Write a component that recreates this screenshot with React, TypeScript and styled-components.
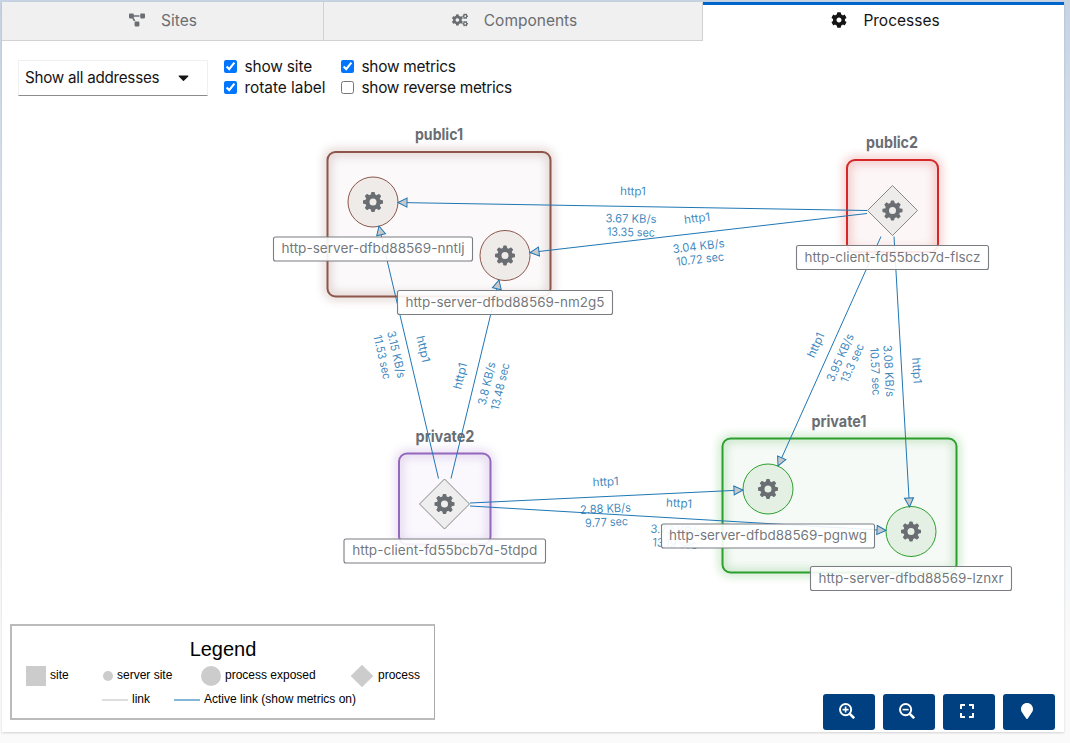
import React from "react";
import styled, { createGlobalStyle } from "styled-components";
import { FaProjectDiagram, FaCogs, FaCog, FaExpand, FaMapMarker, FaCaretDown } from "react-icons/fa";

const font = `Inter, "Open Sans", sans-serif`;

const Global = createGlobalStyle`
  *{box-sizing:border-box}
  body{margin:0;background:#fafafa;font-family:${font};color:#151515}
`;
const Page = styled.div`
  width:1070px;height:743px;padding:2px 5px 0 2px;overflow:hidden;
  background:linear-gradient(to bottom,#c7d3e3 0,#d3deeb 130px,#dfe7f0 300px,#f2f4f7 520px,#fafafa 640px);
`;
const Card = styled.main`
  width:1062px;height:730px;background:#fff;box-shadow:0 1px 2px rgba(3,3,3,.16);
  display:flex;flex-direction:column;
`;
const Tabs = styled.nav`display:flex;height:39px;flex:none;`;
const Tab = styled.button<{ $w: number; $active?: boolean; $shift?: number }>`
  width:${p => p.$w}px;height:39px;margin:0;border:0;
  padding:0 0 3px ${p => p.$shift ?? 0}px;
  display:flex;align-items:center;justify-content:center;gap:16px;
  font:15.5px ${font};color:${p => (p.$active ? "#151515" : "#6a6e73")};
  background:${p => (p.$active ? "#fff" : "#f0f0f0")};
  box-shadow:${p => (p.$active ? "inset 0 3px #06c" : "inset -1px -1px #d2d2d2")};
  svg{width:16px;height:16px}
`;
const Toolbar = styled.div`display:flex;height:57px;padding:19px 0 0 16px;flex:none;`;
const Select = styled.button`
  width:190px;height:36px;padding:0 17px 2px 6px;background:#fff;
  border:1px solid #f0f0f0;border-bottom-color:#8a8d90;
  display:flex;align-items:center;justify-content:space-between;
  font:15.2px ${font};letter-spacing:-.25px;color:#151515;
  svg{width:13px;height:17px}
`;
const Checks = styled.div`
  display:grid;grid-template-columns:117px auto;grid-template-rows:21px 21px;margin:-4px 0 0 16px;
`;
const Check = styled.label<{ $ls: number }>`
  display:flex;align-items:center;gap:7.5px;font-size:15.4px;line-height:21px;letter-spacing:${p => p.$ls}px;white-space:nowrap;
  input{width:13px;height:13px;margin:0;accent-color:#0075ff}
`;
const Graph = styled.svg`display:block;flex:none;width:1062px;height:526px;font-family:${font};`;
const Footer = styled.footer`display:flex;justify-content:space-between;flex:1;padding:0 9px 0 8px;`;
const Legend = styled.section`
  width:425px;height:96px;border:2px solid #bbb;border-right-color:#aaa;border-right-width:1px;
  font-family:"Liberation Sans",Arial,sans-serif;font-size:12px;color:#000;padding:11px 0 0 14px;
`;
const LegendTitle = styled.h2`margin:0 0 1px;font-size:20px;line-height:24px;font-weight:400;text-align:center;padding-right:14px;`;
const LegendRow = styled.div<{ $pad?: number }>`
  display:flex;align-items:center;height:${p => (p.$pad ? 22 : 26)}px;padding-left:${p => p.$pad || 0}px;
`;
const LegendItem = styled.span<{ $w?: number; $gap?: number }>`
  display:flex;align-items:center;gap:${p => p.$gap ?? 4}px;width:${p => (p.$w ? p.$w + "px" : "auto")};white-space:nowrap;
`;
const Swatch = styled.i<{ $s: number; $round?: boolean; $diamond?: boolean }>`
  width:${p => p.$s}px;height:${p => p.$s}px;background:#ccc;margin-top:2px;
  border-radius:${p => (p.$round ? "50%" : 0)};
  transform:${p => (p.$diamond ? "rotate(45deg)" : "none")};
`;
const Stroke = styled.i<{ $c: string }>`width:26px;height:2px;background:${p => p.$c};margin-top:2px;`;
const Controls = styled.div`display:flex;gap:8px;padding-top:70px;`;
const Control = styled.button`
  width:52px;height:36px;border:0;border-radius:3px;background:#004080;color:#fff;padding:0 4px 2px 0;
  display:flex;align-items:center;justify-content:center;
  svg{width:16px;height:16px}
`;

function Magnifier({ plus }: { plus?: boolean }) {
  return (
    <svg viewBox="0 0 16 16" fill="none" stroke="currentColor">
      <circle cx="6.6" cy="6.6" r="5.6" strokeWidth="1.9" />
      <path d="M10.8 10.8l4.4 4.4" strokeWidth="2.6" />
      <path d={plus ? "M3.6 6.6h6M6.6 3.6v6" : "M3.6 6.6h6"} strokeWidth="1.6" />
    </svg>
  );
}

const teeth = [0, 45, 90, 135, 180, 225, 270, 315];

function Gear({ x, y }: { x: number; y: number }) {
  return (
    <g transform={`translate(${x} ${y})`} fill="#6a6e73">
      <circle r="5.6" fill="none" stroke="#6a6e73" strokeWidth="4.2" />
      {teeth.map(a => (
        <path key={a} d="M-2.3-7L-1.7-9.6Q-1.6-10-1.2-10H1.2Q1.6-10 1.7-9.6L2.3-7z" transform={`rotate(${a})`} />
      ))}
    </g>
  );
}

type Site = { name: string; x: number; y: number; w: number; h: number; c: string; fill: string; tx: number; ty: number; tw: number };
const sites: Site[] = [
  { name: "public1", x: 327.5, y: 152, w: 223, h: 144.5, c: "#8c564b", fill: "#fbf9fa", tx: 439, ty: 140, tw: 48 },
  { name: "public2", x: 847, y: 160, w: 91, h: 92, c: "#d62728", fill: "#fcf6f6", tx: 892, ty: 148, tw: 52 },
  { name: "private2", x: 399, y: 453.5, w: 91.5, h: 91, c: "#9467bd", fill: "#faf8fd", tx: 445, ty: 442, tw: 59 },
  { name: "private1", x: 722.5, y: 438.5, w: 234, h: 134, c: "#2ca02c", fill: "#f6faf7", tx: 839, ty: 427, tw: 55 },
];
type Node = { x: number; y: number; kind: "circle" | "diamond"; c: string; fill: string; name: string; lx: number; ly: number; lw: number; tw: number };
const nodes: Node[] = [
  { x: 373, y: 202, kind: "circle", c: "#8c564b", fill: "#efebe9", name: "http-server-dfbd88569-nntlj", lx: 273.5, ly: 237, lw: 199, tw: 183 },
  { x: 505, y: 255.5, kind: "circle", c: "#8c564b", fill: "#efebe9", name: "http-server-dfbd88569-nm2g5", lx: 397.5, ly: 290.5, lw: 215, tw: 199 },
  { x: 892.5, y: 210.5, kind: "diamond", c: "#888", fill: "#eeebeb", name: "http-client-fd55bcb7d-flscz", lx: 796.5, ly: 245.5, lw: 192, tw: 176 },
  { x: 444.5, y: 504, kind: "diamond", c: "#888", fill: "#eeeeef", name: "http-client-fd55bcb7d-5tdpd", lx: 344, ly: 539, lw: 201.5, tw: 185 },
  { x: 768, y: 489, kind: "circle", c: "#2ca02c", fill: "#e3f0e3", name: "http-server-dfbd88569-pgnwg", lx: 661.5, ly: 524, lw: 213, tw: 198 },
  { x: 911, y: 531.5, kind: "circle", c: "#2ca02c", fill: "#e3f0e3", name: "http-server-dfbd88569-lznxr", lx: 810.5, ly: 566.5, lw: 201, tw: 185 },
];
type Lbl = { x: number; y: number; t: string; w: number };
type Link = { a: [number, number]; b: [number, number]; rot: number; labels: Lbl[] };
const links: Link[] = [
  { a: [867, 210.5], b: [398, 202.5], rot: 1, labels: [{ x: 633, y: 191, t: "http1", w: 26 }, { x: 631, y: 218.5, t: "3.67 KB/s", w: 51 }, { x: 631, y: 232, t: "13.35 sec", w: 48 }] },
  { a: [867, 213.5], b: [530, 252.5], rot: -6.6, labels: [{ x: 697, y: 218, t: "http1", w: 26 }, { x: 698.5, y: 246, t: "3.04 KB/s", w: 52 }, { x: 700, y: 259, t: "10.72 sec", w: 48 }] },
  { a: [881, 236.5], b: [778, 466], rot: -66, labels: [{ x: 815.5, y: 345, t: "http1", w: 26 }, { x: 840, y: 357.5, t: "3.95 KB/s", w: 51 }, { x: 852, y: 363, t: "13.3 sec", w: 41 }] },
  { a: [894, 236.5], b: [909.5, 507], rot: 86.7, labels: [{ x: 917, y: 370.5, t: "http1", w: 26 }, { x: 889, y: 371, t: "3.08 KB/s", w: 52 }, { x: 875.5, y: 371.5, t: "10.57 sec", w: 48 }] },
  { a: [438.5, 478.5], b: [379, 226], rot: 77, labels: [{ x: 423.5, y: 349, t: "http1", w: 27 }, { x: 396.5, y: 354.5, t: "3.15 KB/s", w: 48 }, { x: 382.5, y: 357, t: "11.53 sec", w: 45 }] },
  { a: [451, 478.5], b: [499, 280], rot: -76.5, labels: [{ x: 460, y: 376, t: "http1", w: 27 }, { x: 486.5, y: 383.5, t: "3.8 KB/s", w: 44 }, { x: 500, y: 386.5, t: "13.48 sec", w: 48 }] },
  { a: [470, 503], b: [743, 490], rot: -2.7, labels: [{ x: 605.5, y: 481.5, t: "http1", w: 26 }, { x: 605.5, y: 508.5, t: "2.88 KB/s", w: 51 }, { x: 606.5, y: 522, t: "9.77 sec", w: 43 }] },
  { a: [470, 506], b: [886, 530.5], rot: 3.4, labels: [{ x: 679, y: 503, t: "http1", w: 26 }, { x: 676, y: 530, t: "3.73 KB/s", w: 51 }, { x: 675, y: 543.5, t: "13.19 sec", w: 45 }] },
];

const angle = (l: Link) => (Math.atan2(l.b[1] - l.a[1], l.b[0] - l.a[0]) * 180) / Math.PI;

function Topology() {
  return (
    <Graph viewBox="2 98 1062 526">
      <defs>
        <filter id="glow" x="-30%" y="-30%" width="160%" height="160%"><feGaussianBlur stdDeviation="5" /></filter>
      </defs>
      {sites.map(s => (
        <g key={s.name}>
          <rect x={s.x} y={s.y} width={s.w} height={s.h} rx="8" fill={s.fill} />
          <rect x={s.x} y={s.y} width={s.w} height={s.h} rx="8" fill="none" stroke={s.c} strokeWidth="7" opacity=".27" filter="url(#glow)" />
          <rect x={s.x} y={s.y} width={s.w} height={s.h} rx="8" fill="none" stroke={s.c} strokeWidth="2" />
          <text x={s.tx} y={s.ty} textAnchor="middle" fontSize="16" fontWeight="700" fill="#6a6e73" textLength={s.tw} lengthAdjust="spacingAndGlyphs">{s.name}</text>
        </g>
      ))}
      {nodes.map(n => (
        <g key={n.name}>
          {n.kind === "circle"
            ? <circle cx={n.x} cy={n.y} r="25" fill={n.fill} stroke={n.c} />
            : <path d={`M${n.x} ${n.y - 25}l25 25-25 25-25-25z`} fill={n.fill} stroke={n.c} />}
          <Gear x={n.x} y={n.y} />
        </g>
      ))}
      {links.map((l, i) => (
        <g key={i} fill="#1f77b4">
          <path d={`M${l.a}L${l.b}`} stroke="#1f77b4" strokeWidth="1" />
          <path d="M-9-4.5L0 0L-9 4.5z" fill="#c7c9cc" stroke="#1f77b4" transform={`translate(${l.b}) rotate(${angle(l)})`} />
          {l.labels.map(t => (
            <text key={t.t} transform={`translate(${t.x} ${t.y}) rotate(${l.rot})`} y="4.2" fontSize="11.6" fillOpacity=".88" textAnchor="middle" textLength={t.w} lengthAdjust="spacingAndGlyphs">{t.t}</text>
          ))}
        </g>
      ))}
      {nodes.map(n => (
        <g key={n.name}>
          <rect x={n.lx} y={n.ly} width={n.lw} height="24" rx="2" fill="#fff" fillOpacity=".9" stroke="#7a7d81" strokeWidth="1.1" />
          <text x={n.lx + n.lw / 2} y={n.ly + 16} textAnchor="middle" fontSize="13.6" fill="#6a6e73" fillOpacity=".94" textLength={n.tw} lengthAdjust="spacingAndGlyphs">{n.name}</text>
        </g>
      ))}
    </Graph>
  );
}

export default function App() {
  return (
    <>
      <Global />
      <Page>
        <Card>
          <Tabs>
            <Tab $w={322}><FaProjectDiagram />Sites</Tab>
            <Tab $w={379} $shift={2}><FaCogs />Components</Tab>
            <Tab $w={361} $shift={4} $active><FaCog />Processes</Tab>
          </Tabs>
          <Toolbar>
            <Select>Show all addresses<FaCaretDown /></Select>
            <Checks>
              <Check $ls={-0.15}><input type="checkbox" defaultChecked />show site</Check>
              <Check $ls={-0.26}><input type="checkbox" defaultChecked />show metrics</Check>
              <Check $ls={-0.02}><input type="checkbox" defaultChecked />rotate label</Check>
              <Check $ls={-0.28}><input type="checkbox" />show reverse metrics</Check>
            </Checks>
          </Toolbar>
          <Topology />
          <Footer>
            <Legend>
              <LegendTitle>Legend</LegendTitle>
              <LegendRow>
                <LegendItem $w={77}><Swatch $s={20} />site</LegendItem>
                <LegendItem $w={98}><Swatch $s={10} $round />server site</LegendItem>
                <LegendItem $w={153}><Swatch $s={20} $round />process exposed</LegendItem>
                <LegendItem $gap={8}><Swatch $s={16} $diamond />process</LegendItem>
              </LegendRow>
              <LegendRow $pad={76}>
                <LegendItem $w={72}><Stroke $c="#ddd" />link</LegendItem>
                <LegendItem><Stroke $c="#86b6d8" />Active link (show metrics on)</LegendItem>
              </LegendRow>
            </Legend>
            <Controls>
              <Control aria-label="Zoom in"><Magnifier plus /></Control>
              <Control aria-label="Zoom out"><Magnifier /></Control>
              <Control aria-label="Fit"><FaExpand /></Control>
              <Control aria-label="Reset"><FaMapMarker /></Control>
            </Controls>
          </Footer>
        </Card>
      </Page>
    </>
  );
}
